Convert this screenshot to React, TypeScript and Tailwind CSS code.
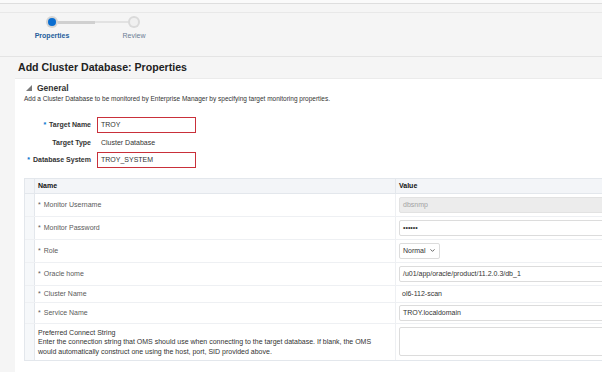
import { ChevronDown } from "lucide-react";

const rows = [
  { name: "Monitor Username", h: "h-[23px]", kind: "disabled", value: "dbsnmp" },
  { name: "Monitor Password", h: "h-[23px]", kind: "input", value: "••••••" },
  { name: "Role", h: "h-[23px]", kind: "select", value: "Normal" },
  { name: "Oracle home", h: "h-[23px]", kind: "input", value: "/u01/app/oracle/product/11.2.0.3/db_1" },
  { name: "Cluster Name", h: "h-[17px]", kind: "text", value: "ol6-112-scan" },
  { name: "Service Name", h: "h-[21px]", kind: "input", value: "TROY.localdomain" },
];

function ValueCell({ kind, value }: { kind: string; value: string }) {
  if (kind === "disabled")
    return (
      <div className="h-[16px] w-full bg-[#ececec] border border-[#e2e2e2] rounded-[2px] flex items-center pl-[3px] text-[#a3a3a3]">
        {value}
      </div>
    );
  if (kind === "input")
    return (
      <div className="h-[16px] w-full bg-white border border-[#dcdcdc] rounded-[2px] flex items-center pl-[3px] text-[#333]">
        {value}
      </div>
    );
  if (kind === "select")
    return (
      <div className="h-[16px] w-[41px] bg-white border border-[#dcdcdc] rounded-[2px] flex items-center justify-between pl-[3px] pr-[3px] text-[#333]">
        {value}
        <ChevronDown className="w-[7px] h-[7px] text-[#555]" strokeWidth={3} />
      </div>
    );
  return <div className="pl-[3px] text-[#333]">{value}</div>;
}

export default function App() {
  return (
    <div className="w-[602px] h-[372px] overflow-hidden bg-[#f5f5f5] font-['Liberation_Sans',Arial,sans-serif] text-[7px] leading-none">
      {/* top bars */}
      <div className="h-[4px] bg-[#fafafa] border-b border-[#dedede]" />
      <div className="h-[9px] border-b border-[#e8e8e8]" />

      {/* wizard train */}
      <div className="h-[44px] border-b border-[#e4e4e4] pt-[3px] pl-[32px] flex items-start">
        <div className="w-[40px] flex flex-col items-center">
          <div className="w-[12px] h-[12px] rounded-full bg-[#d4d4d4] flex items-center justify-center">
            <div className="w-[8px] h-[8px] rounded-full bg-[#0a6ed1]" />
          </div>
          <div className="mt-[4px] font-bold text-[#245d9b] text-[7px]">Properties</div>
        </div>
        <div className="ml-[-14px] mr-[-15px] w-[71px] mt-[5px] flex">
          <div className="w-[37px] h-[3px] bg-[#d0d0d0]" />
          <div className="flex-1 h-[2px] bg-[#e2e2e2]" />
        </div>
        <div className="w-[40px] flex flex-col items-center">
          <div className="w-[12px] h-[12px] rounded-full bg-[#dadada] flex items-center justify-center">
            <div className="w-[8px] h-[8px] rounded-full bg-[#f0f0f0]" />
          </div>
          <div className="mt-[4px] text-[#6b7d94] text-[7px]">Review</div>
        </div>
      </div>

      {/* title */}
      <div className="h-[21px] pl-[18px] flex items-center">
        <h1 className="font-bold text-[10.6px] text-[#222]">Add Cluster Database: Properties</h1>
      </div>

      {/* panel */}
      <div className="ml-[15px] bg-white border-t border-[#ebebeb] h-[300px] pt-[4px]">
        <div className="flex items-center pl-[11px] h-[10px]">
          <svg width="6" height="6" viewBox="0 0 6 6">
            <polygon points="6,0 6,6 0,6" fill="#7a7a7a" />
          </svg>
          <span className="ml-[5px] font-bold text-[8.5px] text-[#333]">General</span>
        </div>
        <div className="pl-[9px] mt-[3px] text-[#333] text-[6.5px]">
          Add a Cluster Database to be monitored by Enterprise Manager by specifying target monitoring properties.
        </div>

        {/* form */}
        <div className="mt-[14px] flex flex-col">
          {[
            { label: "Target Name", req: true, value: "TROY", input: true },
            { label: "Target Type", req: false, value: "Cluster Database", input: false },
            { label: "Database System", req: true, value: "TROY_SYSTEM", input: true },
          ].map((f, i) => (
            <div key={f.label} className={`flex items-center ${i === 1 ? "h-[19px]" : "h-[16px]"}`}>
              <div className="w-[76px] text-right font-bold text-[#333]">
                {f.req && <span className="text-[#0572ce] mr-[3px]">*</span>}
                {f.label}
              </div>
              {f.input ? (
                <div className="ml-[6px] w-[99px] h-[16px] border-[1.5px] border-[#c9303a] flex items-center pl-[3px] text-[#333]">
                  {f.value}
                </div>
              ) : (
                <div className="ml-[10px] text-[#333]">{f.value}</div>
              )}
            </div>
          ))}
        </div>

        {/* table */}
        <div className="mt-[10px] ml-[9px] w-[600px] border border-[#e3e7ec]">
          <div className="flex h-[15px] bg-[#f3f5f8] border-b border-[#e3e7ec] font-bold text-[#111]">
            <div className="w-[10px] border-r border-[#e3e7ec]" />
            <div className="w-[361px] border-r border-[#e3e7ec] flex items-center pl-[3px]">Name</div>
            <div className="flex-1 flex items-center pl-[3px]">Value</div>
          </div>
          {rows.map((r) => (
            <div key={r.name} className={`flex ${r.h} border-b border-[#eef0f3]`}>
              <div className="w-[10px] bg-[#f6f8fa] border-r border-[#e3e7ec]" />
              <div className="w-[361px] border-r border-[#eef0f3] flex items-center pl-[3px] text-[#5a5a5a]">
                <span className="mr-[3px]">*</span>
                {r.name}
              </div>
              <div className="flex-1 flex items-center pl-[3px]">
                <ValueCell kind={r.kind} value={r.value} />
              </div>
            </div>
          ))}
          <div className="flex h-[36px]">
            <div className="w-[10px] bg-[#f6f8fa] border-r border-[#e3e7ec]" />
            <div className="w-[361px] border-r border-[#eef0f3] pl-[3px] pt-[4px] text-[#333] leading-[9.5px]">
              Preferred Connect String
              <br />
              Enter the connection string that OMS should use when connecting to the target database. If blank, the OMS
              <br />
              would automatically construct one using the host, port, SID provided above.
            </div>
            <div className="flex-1 pl-[3px] pt-[3px]">
              <div className="h-[29px] w-full border border-[#dcdcdc] rounded-[2px] bg-white" />
            </div>
          </div>
        </div>
      </div>
    </div>
  );
}
